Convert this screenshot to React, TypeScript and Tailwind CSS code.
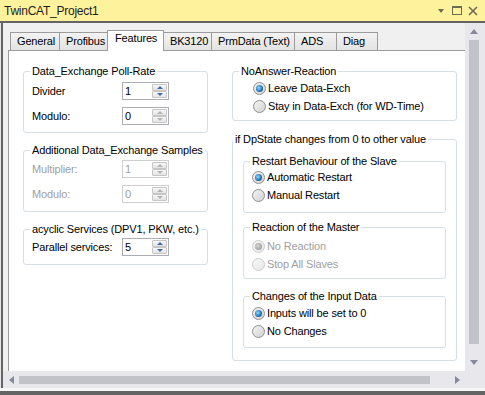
import React from 'react';

const TABS = [
  { label: 'General', w: 'w-[50px]' },
  { label: 'Profibus', w: 'w-[49px]' },
  { label: 'Features', w: 'w-[57px]', active: true },
  { label: 'BK3120', w: 'w-[49px]' },
  { label: 'PrmData (Text)', w: 'w-[84px]' },
  { label: 'ADS', w: 'w-[43px]' },
  { label: 'Diag', w: 'w-[42px]' },
];

const SpinBtn: React.FC<{ dir: 'up' | 'down'; on: boolean }> = ({ dir, on }) => (
  <div className="flex-1 flex items-center justify-center border border-[#c6c6c6] rounded-[1px] bg-linear-to-b from-[#f7f7f7] to-[#e4e4e4]">
    {dir === 'up' ? (
      <span className={`w-0 h-0 border-x-[3px] border-x-transparent border-b-[3px] ${on ? 'border-b-[#3f6aa6]' : 'border-b-[#b4b4b4]'}`} />
    ) : (
      <span className={`w-0 h-0 border-x-[3px] border-x-transparent border-t-[3px] ${on ? 'border-t-[#3f6aa6]' : 'border-t-[#b4b4b4]'}`} />
    )}
  </div>
);

const Spinner: React.FC<{ value: string; disabled?: boolean; arrows?: boolean }> = ({ value, disabled, arrows }) => (
  <div className={`flex h-[18px] w-[47px] border bg-white ${disabled ? 'border-[#cfcfcf] text-[#a0a0a0]' : 'border-[#abadb3] text-black'}`}>
    <span className="flex-1 pl-[2px] leading-[16px]">{value}</span>
    <div className="flex flex-col w-[15px] my-px mr-px">
      <SpinBtn dir="up" on={!!arrows} />
      <SpinBtn dir="down" on={!!arrows} />
    </div>
  </div>
);

const Radio: React.FC<{ checked?: boolean; disabled?: boolean }> = ({ checked, disabled }) => (
  <span
    className={`w-[13px] h-[13px] shrink-0 rounded-full border flex items-center justify-center ${
      disabled
        ? 'border-[#cbcbcb] bg-linear-to-br from-[#f7f7f7] to-[#e8e8e8]'
        : 'border-[#8e8f8f] bg-linear-to-br from-[#f4f4f4] to-[#d2d2d2]'
    }`}
  >
    {checked && (
      <span
        className={`w-[7px] h-[7px] rounded-full ${
          disabled
            ? 'bg-[radial-gradient(circle_at_40%_40%,#d6d6d6,#8c8c8c)]'
            : 'bg-[radial-gradient(circle_at_40%_40%,#8fdcff,#1f6fb0_60%,#0f3f70)]'
        }`}
      />
    )}
  </span>
);

const RadioRow: React.FC<{ label: string; checked?: boolean; disabled?: boolean }> = ({ label, checked, disabled }) => (
  <div className={`flex items-center h-[18px] gap-[2px] ${disabled ? 'text-[#a0a0a0]' : 'text-black'}`}>
    <Radio checked={checked} disabled={disabled} />
    <span className="whitespace-nowrap">{label}</span>
  </div>
);

const Group: React.FC<{ title: string; className?: string; legend?: string; children: React.ReactNode }> = ({
  title,
  className,
  legend,
  children,
}) => (
  <fieldset className={`border border-[#d5dfe5] rounded-[3px] ${className ?? ''}`}>
    <legend className={`px-[2px] leading-[13px] text-black whitespace-nowrap ${legend ?? 'ml-[6px]'}`}>{title}</legend>
    {children}
  </fieldset>
);

const Field: React.FC<{ label: string; value: string; disabled?: boolean; arrows?: boolean }> = ({
  label,
  value,
  disabled,
  arrows,
}) => (
  <div className="flex items-center">
    <span className={`w-[90px] whitespace-nowrap ${disabled ? 'text-[#a0a0a0]' : 'text-black'}`}>{label}</span>
    <Spinner value={value} disabled={disabled} arrows={arrows} />
  </div>
);

export default function App() {
  return (
    <div className="w-[485px] h-[395px] flex flex-col bg-[#f0f0f0] font-['Liberation_Sans',Arial,sans-serif] text-[11px] tracking-[-0.15px] overflow-hidden">
      {/* title bar */}
      <div className="h-[21px] shrink-0 bg-[#fff29d] flex items-center pl-[4px] pr-[7px]">
        <span className="flex-1 text-[12px] tracking-[-0.25px] text-[#1e1e1e] leading-[14px]">TwinCAT_Project1</span>
        <span className="w-0 h-0 border-x-[3.5px] border-x-transparent border-t-[4px] border-t-[#6e6b55]" />
        <span className="ml-[8px] w-[10px] h-[9px] border border-t-2 border-[#6e6b55]" />
        <svg className="ml-[6px]" width="10" height="10" viewBox="0 0 10 10">
          <path d="M1 1 L9 9 M9 1 L1 9" stroke="#6e6b55" strokeWidth="1.6" />
        </svg>
      </div>
      <div className="h-[2px] shrink-0 bg-[#646464]" />

      <div className="flex flex-1 min-h-0">
        <div className="w-[3px] flex">
          <span className="w-px bg-[#e6e6e6]" />
          <span className="w-[2px] bg-[#646464]" />
        </div>

        <div className="flex-1 flex flex-col min-w-0">
          {/* viewport */}
          <div className="flex-1 overflow-hidden pl-[5px] pt-[7px]">
            <div className="flex items-end h-[20px] pl-[2px] relative z-10">
              {TABS.map((t, i) =>
                t.active ? (
                  <div
                    key={t.label}
                    className={`${t.w} h-[21px] -mb-px -ml-px relative z-10 bg-white border border-b-0 border-[#9c9c9c] pl-[7px] pt-[1px] leading-[13px]`}
                  >
                    {t.label}
                  </div>
                ) : (
                  <div
                    key={t.label}
                    className={`${t.w} h-[18px] ${i > 0 ? '-ml-px' : ''} bg-linear-to-b from-[#f3f3f3] to-[#e3e3e3] border border-b-0 border-[#9c9c9c] pl-[6px] pt-[2px] leading-[13px] whitespace-nowrap`}
                  >
                    {t.label}
                  </div>
                )
              )}
            </div>

            <div className="w-[470px] h-[340px] bg-white border border-[#9c9c9c] flex items-start pl-[14px] pt-[14px]">
              {/* left column */}
              <div className="w-[185px] flex flex-col">
                <Group title="Data_Exchange Poll-Rate" className="pb-[7px]">
                  <div className="flex flex-col gap-[7px] pt-[4px] pl-[8px]">
                    <Field label="Divider" value="1" arrows />
                    <Field label="Modulo:" value="0" />
                  </div>
                </Group>
                <Group title="Additional Data_Exchange Samples" className="mt-[11px] pb-[8px]">
                  <div className="flex flex-col gap-[7px] pt-[3px] pl-[8px]">
                    <Field label="Multiplier:" value="1" disabled />
                    <Field label="Modulo:" value="0" disabled />
                  </div>
                </Group>
                <Group title="acyclic Services (DPV1, PKW, etc.)" className="mt-[11px] pb-[8px]">
                  <div className="pt-[2px] pl-[8px]">
                    <Field label="Parallel services:" value="5" arrows />
                  </div>
                </Group>
              </div>

              {/* right column */}
              <div className="w-[225px] ml-[24px] flex flex-col">
                <Group title="NoAnswer-Reaction" className="pb-[5px]">
                  <div className="pl-[20px] pt-[1px]">
                    <RadioRow label="Leave Data-Exch" checked />
                    <RadioRow label="Stay in Data-Exch (for WD-Time)" />
                  </div>
                </Group>
                <Group title="if DpState changes from 0 to other value" legend="ml-0" className="mt-[12px] pb-[12px]">
                  <Group title="Restart Behaviour of the Slave" className="mx-[10px] mt-[9px] pb-[8px]">
                    <div className="pl-[8px]">
                      <RadioRow label="Automatic Restart" checked />
                      <RadioRow label="Manual Restart" />
                    </div>
                  </Group>
                  <Group title="Reaction of the Master" className="mx-[10px] mt-[8px] pb-[5px]">
                    <div className="pl-[8px] pt-[3px]">
                      <RadioRow label="No Reaction" checked disabled />
                      <RadioRow label="Stop All Slaves" disabled />
                    </div>
                  </Group>
                  <Group title="Changes of the Input Data" className="mx-[10px] mt-[11px] pb-[7px]">
                    <div className="pl-[8px] pt-[1px]">
                      <RadioRow label="Inputs will be set to 0" checked />
                      <RadioRow label="No Changes" />
                    </div>
                  </Group>
                </Group>
              </div>
            </div>
          </div>

          {/* horizontal scrollbar */}
          <div className="h-[17px] shrink-0 bg-[#e8e8ec] flex items-center">
            <div className="w-[16px] flex justify-center">
              <span className="w-0 h-0 border-y-[4.5px] border-y-transparent border-r-[5px] border-r-[#868999]" />
            </div>
            <div className="w-[411px] h-[8px] bg-[#c2c3c9]" />
            <div className="flex-1" />
            <div className="w-[16px] flex justify-center">
              <span className="w-0 h-0 border-y-[4.5px] border-y-transparent border-l-[5px] border-l-[#868999]" />
            </div>
          </div>
        </div>

        {/* vertical scrollbar */}
        <div className="w-[20px] shrink-0 bg-[#e8e8ec] flex flex-col">
          <div className="h-[17px] flex items-center pl-[5px]">
            <span className="w-0 h-0 border-x-[4.5px] border-x-transparent border-b-[5px] border-b-[#868999]" />
          </div>
          <div className="ml-[4px] w-[10px] h-[304px] bg-[#c2c3c9]" />
          <div className="flex-1" />
          <div className="h-[17px] flex items-center pl-[5px]">
            <span className="w-0 h-0 border-x-[4.5px] border-x-transparent border-t-[5px] border-t-[#868999]" />
          </div>
          <div className="h-[17px]" />
        </div>
      </div>

      <div className="h-[3px] shrink-0 bg-[#f7f7f7]" />
      <div className="h-[4px] shrink-0 bg-[#646464]" />
    </div>
  );
}
